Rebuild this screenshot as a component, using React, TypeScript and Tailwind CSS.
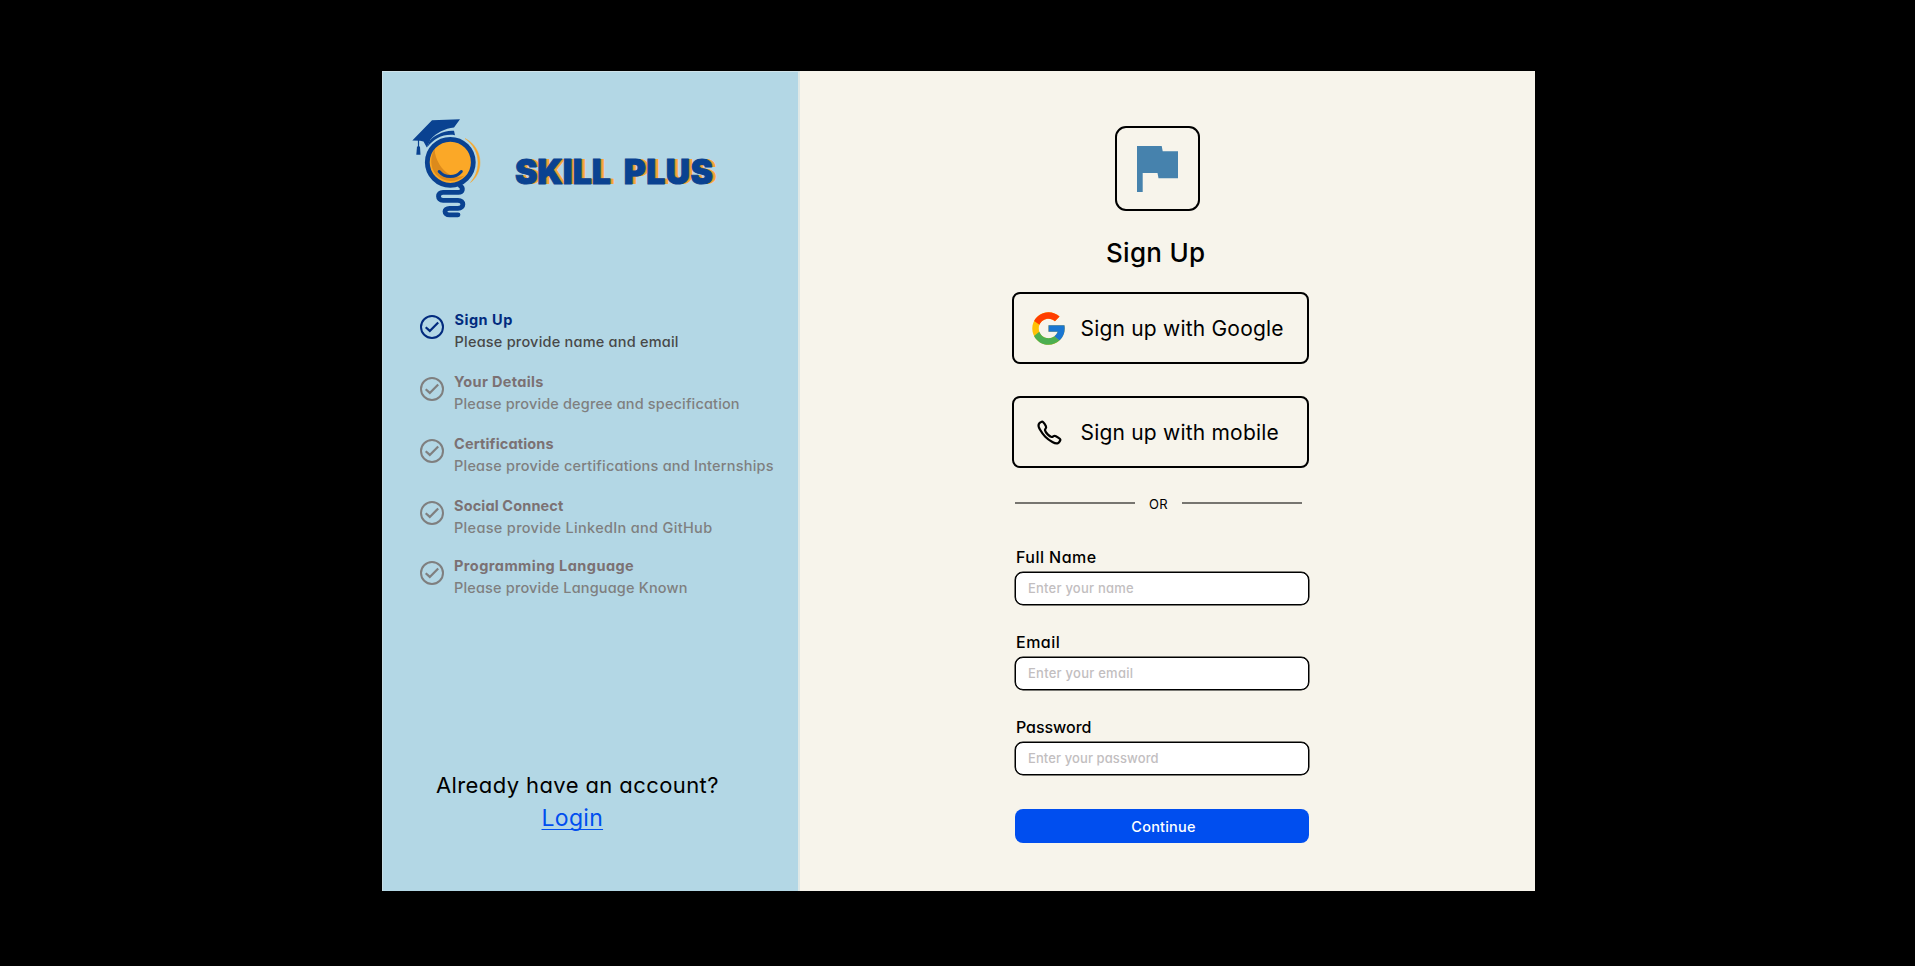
import { FcGoogle } from "react-icons/fc";
import { IoCallOutline } from "react-icons/io5";

type Step = {
  title: string;
  text: string;
  gap: string;
  titleClass: string;
  textClass: string;
  iconClass: string;
};

const steps: Step[] = [
  {
    title: "Sign Up",
    text: "Please provide name and email",
    gap: "",
    titleClass: "text-[#022b7e] tracking-[0.5px] pl-[0.5px]",
    textClass: "text-[#484848] tracking-[0.22px] pl-[0.5px]",
    iconClass: "text-[#022b7e]",
  },
  {
    title: "Your Details",
    text: "Please provide degree and specification",
    gap: "mt-[18px]",
    titleClass: "text-[#7b7173] tracking-[0.34px]",
    textClass: "text-[#7f7f7f] tracking-[0.15px]",
    iconClass: "text-[#7f7f7f]",
  },
  {
    title: "Certifications",
    text: "Please provide certifications and Internships",
    gap: "mt-[18px]",
    titleClass: "text-[#7b7173] tracking-[0.16px]",
    textClass: "text-[#7f7f7f] tracking-[0.21px]",
    iconClass: "text-[#7f7f7f]",
  },
  {
    title: "Social Connect",
    text: "Please provide LinkedIn and GitHub",
    gap: "mt-[18px]",
    titleClass: "text-[#7b7173] tracking-[0.14px]",
    textClass: "text-[#7f7f7f] tracking-[0.32px]",
    iconClass: "text-[#7f7f7f]",
  },
  {
    title: "Programming Language",
    text: "Please provide Language Known",
    gap: "mt-[16px]",
    titleClass: "text-[#7b7173] tracking-[0.45px]",
    textClass: "text-[#7f7f7f] tracking-[0.17px]",
    iconClass: "text-[#7f7f7f]",
  },
];

const fields = [
  { id: "name", label: "Full Name", type: "text", hint: "Enter your name", labelClass: "tracking-[0.45px]", hintClass: "tracking-[0.22px]" },
  { id: "email", label: "Email", type: "email", hint: "Enter your email", labelClass: "tracking-[0.5px]", hintClass: "tracking-[0.25px]" },
  { id: "password", label: "Password", type: "password", hint: "Enter your password", labelClass: "tracking-[-0.05px]", hintClass: "tracking-[0.1px]" },
];

function CheckCircle({ className }: { className: string }) {
  return (
    <svg viewBox="0 0 24 24" className={`size-6 shrink-0 ${className}`} fill="none" stroke="currentColor">
      <circle cx="12" cy="12" r="11" strokeWidth="2" />
      <path d="M5.7 12.2 9.8 15.9 18.200 7.400" strokeWidth="2.2" />
    </svg>
  );
}

function BulbLogo() {
  return (
    <svg viewBox="0 0 85 115" className="h-[115px] w-[85px] shrink-0" fill="none">
      {/* outer glow arc */}
      <path d="M60 28.5C69.5 33 75 42.500 75 52.500C75 60.500 71.500 68 65.500 72.500C70.300 67 73 60 73 52.500C73 43 68 34 60 28.500Z" fill="#f9a828" stroke="#f2a93a" strokeWidth="0.5" />
      {/* bulb */}
      <circle cx="45.300" cy="52.300" r="22.500" fill="#fba827" />
      <path d="M29.500 39C25 47 25 57 30.500 64C38 72.500 51.500 73.500 59.500 65.500C50 69.500 40.500 64 34.500 54.500C31.500 49.500 29.800 44.500 29.500 39Z" fill="#dc8a1c" />
      <circle cx="45.300" cy="52.300" r="23" stroke="#0a4291" strokeWidth="4.800" />
      <path d="M34.200 61.500C40 68.300 50.500 68.300 56.300 61.500" stroke="#0a4291" strokeWidth="3" strokeLinecap="round" />
      {/* coil base */}
      <path
        d="M55 75.500C59 78.500 57.500 82.300 53.500 82.300H38C32 82.300 32 90.300 38 90.300H53C59.500 90.300 59.500 98.300 53 98.300H44.500C38.500 98.300 38.500 104.800 44.500 104.800H53"
        stroke="#0a4291"
        strokeWidth="4.800"
        strokeLinecap="round"
      />
      {/* graduation cap */}
      <path d="M7.300 30.500 27 10.300 55 9.200 49 17.500C40 18.500 31.500 22.500 25.500 29.500L21.800 37.500 18.500 31.500 15 30.800Z" fill="#0a4291" />
      <path d="M33.500 24.300C38 21.500 43.500 20.300 49 20.700L50 25.200C39 23.500 29.500 28 22 37.500L24.500 31C27 28 30 25.800 33.500 24.300Z" fill="#0a4291" />
      <path d="M13.500 30V38" stroke="#0a4291" strokeWidth="1.200" />
      <path d="M12 36.500H15L15.500 44.800H11.300Z" fill="#0a4291" />
    </svg>
  );
}

export default function App() {
  return (
    <div className="flex h-[966px] w-full items-start justify-center bg-black pt-[71px] font-[Inter,sans-serif] [font-feature-settings:'cv11']">
      <main className="ml-[2px] flex h-[820px] w-[1153px] bg-[#f7f4eb]">
        <aside className="flex w-[418px] shrink-0 flex-col border-t border-r-2 border-l border-t-[#cfe3ea] border-r-[#dfe8e6] border-l-[#c9dfe6] bg-[#b3d7e5]">
          <div className="flex pt-[38px] pl-[22px]">
            <BulbLogo />
            <div className="mt-[40px] ml-[25px] flex gap-[13px] text-[33.5px] leading-[44px] font-black text-[#0a4291] [-webkit-text-stroke:0.900px_#0a4291] [text-shadow:1.500px_0_0_#c8923f,3px_0_0_#f5a83a,4px_0_0_#f5a83a]">
              <span className="tracking-[0.050px]">SKILL</span>
              <span className="tracking-[0.600px]">PLUS</span>
            </div>
          </div>

          <ol className="mt-[84px] pl-[37px]">
            {steps.map((s) => (
              <li key={s.title} className={`flex h-[44px] gap-[10px] text-[14.5px] leading-[22px] whitespace-nowrap ${s.gap}`}>
                <span className="pt-[6px]">
                  <CheckCircle className={s.iconClass} />
                </span>
                <div>
                  <h3 className={`font-bold ${s.titleClass}`}>{s.title}</h3>
                  <p className={`font-[450] ${s.textClass}`}>{s.text}</p>
                </div>
              </li>
            ))}
          </ol>

          <div className="mt-auto mb-[54px] pl-[53px] leading-[33px] whitespace-nowrap">
            <p className="text-[22px] tracking-[0.400px] text-black">Already have an account?</p>
            <a href="#login" className="ml-[105.500px] text-[23px] tracking-[0.300px] text-[#004eef] underline decoration-1 underline-offset-[3px] [text-decoration-skip-ink:none]">
              Login
            </a>
          </div>
        </aside>

        <section className="flex flex-col pl-[212px] text-black">
          <div className="mt-[55px] ml-[103px] flex size-[85px] items-center justify-center rounded-[11px] border-2 border-black">
            <svg viewBox="0 0 41 46" className="h-[46px] w-[41px]" fill="#4682ad">
              <path d="M0 0H24.700L25.700 5.300H41V32.300H21.500L20.500 27H5.700V46H0Z" />
            </svg>
          </div>
          <h1 className="mt-[26px] ml-[94px] text-[26px] leading-[32px] font-medium tracking-[0.300px]">Sign Up</h1>

          <button className="mt-[23px] flex h-[72px] w-[297px] items-center rounded-lg border-2 border-black pl-[15px] text-[21px]">
            <FcGoogle className="size-[39px]" />
            <span className="ml-[12.5px] pt-[2px] tracking-[0.200px]">Sign up with Google</span>
          </button>
          <button className="mt-[32px] flex h-[72px] w-[297px] items-center rounded-lg border-2 border-black pl-[22px] text-[21px]">
            <IoCallOutline className="size-[27px] [&_path]:[stroke-width:42px]" />
            <span className="ml-[17.5px] pt-[2px] tracking-[0.200px]">Sign up with mobile</span>
          </button>

          <div className="mt-[26px] ml-[3px] flex h-[20px] w-[287px] items-center justify-between text-[13px]">
            <span className="mb-[2px] h-[2px] w-[120px] bg-[#777570]" />
            <span className="pt-px tracking-[0.300px]">OR</span>
            <span className="mb-[2px] h-[2px] w-[120px] bg-[#777570]" />
          </div>

          <form className="mt-[33px] ml-[2.5px] flex w-[294px] flex-col gap-[27px]">
            {fields.map((f) => (
              <div key={f.id} className="flex flex-col gap-[5px]">
                <label htmlFor={f.id} className={`pl-[1.5px] text-[16px] leading-[20px] font-[550] ${f.labelClass}`}>
                  {f.label}
                </label>
                <input
                  id={f.id}
                  type={f.type}
                  placeholder={f.hint}
                  className={`h-[33px] rounded-lg border border-black bg-white pb-[2px] pl-[12.5px] text-[13px] font-medium shadow-[0_0_0_0.5px_#000] placeholder:text-[#c2bebf] ${f.hintClass}`}
                />
              </div>
            ))}
            <button type="button" className="mt-[7px] h-[34px] rounded-lg bg-[#004eef] pt-px pl-[4px] text-[14.5px] font-medium tracking-[0.200px] text-white">
              Continue
            </button>
          </form>
        </section>
      </main>
    </div>
  );
}
